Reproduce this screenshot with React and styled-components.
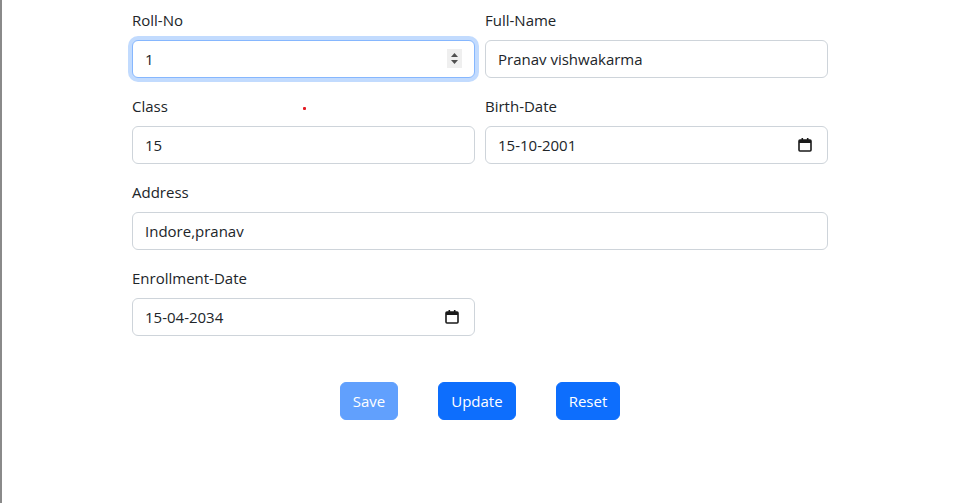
import React from 'react';
import styled, { createGlobalStyle, css } from 'styled-components';

const GlobalStyle = createGlobalStyle`
    html, body {
        margin: 0;
        padding: 0;
        background: #fff;
    }
    body {
        font-family: "Open Sans", "Noto Sans", Arial, sans-serif;
        color: #212529;
    }
`;

const Page = styled.div`
    min-height: 100vh;
    box-sizing: border-box;
    border-left: 2px solid #8a8a8a;
    padding-top: 8px;
`;

const Container = styled.form`
    position: relative;
    width: 720px;
    box-sizing: border-box;
    margin: 0 auto;
    padding: 0 12px;
`;

const Grid = styled.div`
    display: grid;
    grid-template-columns: 1fr 1fr;
    column-gap: 10px;
`;

const Field = styled.div`
    margin-bottom: 16px;
    grid-column: ${props => (props.wide ? '1 / span 2' : 'auto')};
`;

const Label = styled.label`
    display: block;
    font-size: 15px;
    line-height: 24px;
    margin-bottom: 8px;
`;

const InputWrap = styled.div`
    position: relative;
`;

const Input = styled.input`
    display: block;
    width: 100%;
    box-sizing: border-box;
    height: 38px;
    padding: 6px 12px;
    font-family: inherit;
    font-size: 15px;
    line-height: 24px;
    color: #212529;
    background: #fff;
    border: 1px solid #ced4da;
    border-radius: 6px;
    outline: none;
    ${props => props.focused && css`
        border-color: #86b7fe;
        box-shadow: 0 0 0 4px rgba(13, 110, 253, 0.25);
    `}
`;

const Spinner = styled.div`
    position: absolute;
    top: 9px;
    right: 13px;
    width: 15px;
    height: 19px;
    background: #efefef;
    display: flex;
    align-items: center;
    justify-content: center;
`;

const CalendarIcon = styled.div`
    position: absolute;
    top: 11px;
    right: 16px;
    width: 14px;
    height: 15px;
    display: flex;
`;

const RedDot = styled.span`
    position: absolute;
    left: 183px;
    top: 99px;
    width: 3px;
    height: 3px;
    border-radius: 1px;
    background: #e31b23;
`;

const Buttons = styled.div`
    display: flex;
    justify-content: center;
    gap: 40px;
    margin-top: 30px;
`;

const Button = styled.button`
    height: 38px;
    padding: 6px 12px;
    font-family: inherit;
    font-size: 15px;
    line-height: 24px;
    color: #fff;
    background: #0d6efd;
    border: 1px solid #0d6efd;
    border-radius: 6px;
    opacity: ${props => (props.disabled ? 0.65 : 1)};
    cursor: pointer;
`;

const Arrows = () => (
    <svg width="9" height="13" viewBox="0 0 9 13">
        <path d="M4.5 1 L8 5 H1 Z" fill="#505050" />
        <path d="M4.5 12 L8 8 H1 Z" fill="#505050" />
    </svg>
);

const Calendar = () => (
    <svg width="14" height="15" viewBox="0 0 14 15">
        <rect x="1" y="3" width="12" height="11" rx="1" fill="none" stroke="#1a1a1a" strokeWidth="1.6" />
        <rect x="1" y="3" width="12" height="3" fill="#1a1a1a" />
        <rect x="3.5" y="1" width="1.6" height="3" fill="#1a1a1a" />
        <rect x="8.9" y="1" width="1.6" height="3" fill="#1a1a1a" />
    </svg>
);

const FormField = ({ label, value, wide, focused, type }) => (
    <Field wide={wide}>
        <Label>{label}</Label>
        <InputWrap>
            <Input value={value} focused={focused} readOnly />
            {type === 'number' && <Spinner><Arrows /></Spinner>}
            {type === 'date' && <CalendarIcon><Calendar /></CalendarIcon>}
        </InputWrap>
    </Field>
);

export default function App() {
    return (
        <Page>
            <GlobalStyle />
            <Container onSubmit={e => e.preventDefault()}>
                <RedDot />
                <Grid>
                    <FormField label="Roll-No" value="1" type="number" focused />
                    <FormField label="Full-Name" value="Pranav vishwakarma" />
                    <FormField label="Class" value="15" />
                    <FormField label="Birth-Date" value="15-10-2001" type="date" />
                    <FormField label="Address" value="Indore,pranav" wide />
                    <FormField label="Enrollment-Date" value="15-04-2034" type="date" />
                </Grid>
                <Buttons>
                    <Button type="button" disabled>Save</Button>
                    <Button type="button">Update</Button>
                    <Button type="button">Reset</Button>
                </Buttons>
            </Container>
        </Page>
    );
}
